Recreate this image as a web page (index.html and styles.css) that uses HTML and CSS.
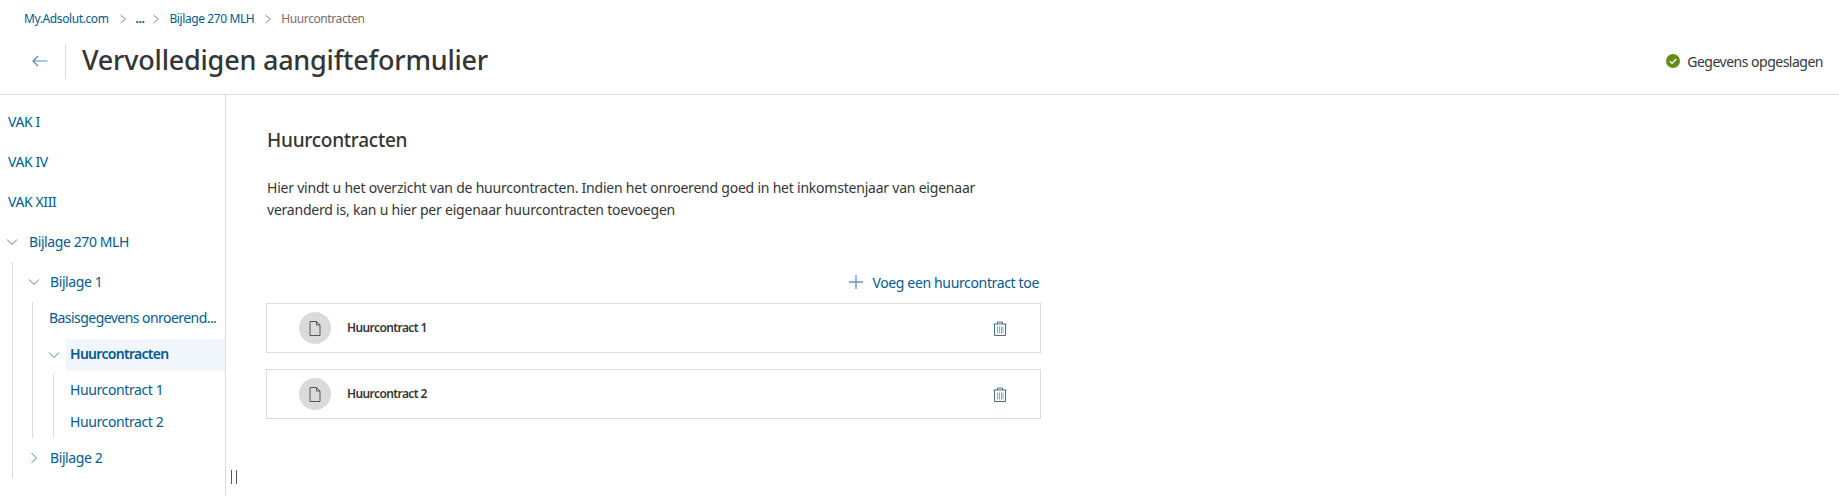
FILE: index.html
```html
<!DOCTYPE html>
<html lang="nl">
<head>
<meta charset="utf-8">
<title>Vervolledigen aangifteformulier</title>
<link rel="stylesheet" href="styles.css">
</head>
<body>
<header class="header">
  <nav class="crumbs">
    <a class="crumb">My.Adsolut.com</a>
    <svg class="sep" viewBox="0 0 8 10"><path d="M1.5 1l5 4-5 4"/></svg>
    <a class="crumb crumb-dots">...</a>
    <svg class="sep sep-tight" viewBox="0 0 8 10"><path d="M1.5 1l5 4-5 4"/></svg>
    <a class="crumb">Bijlage 270 MLH</a>
    <svg class="sep" viewBox="0 0 8 10"><path d="M1.5 1l5 4-5 4"/></svg>
    <span class="crumb-current">Huurcontracten</span>
  </nav>
  <div class="title-row">
    <div class="title-left">
      <svg class="back" viewBox="0 0 16 12"><path d="M15.5 6H1M6 1L1 6l5 5"/></svg>
      <h1 class="title">Vervolledigen aangifteformulier</h1>
    </div>
    <div class="status">
      <svg class="status-icon" viewBox="0 0 14 14"><circle cx="7" cy="7" r="7"/><path d="M3.8 7.2l2.2 2.2 4.2-4.4"/></svg>
      <span>Gegevens opgeslagen</span>
    </div>
  </div>
</header>
<div class="main">
  <aside class="sidebar">
    <ul class="tree tree-root">
      <li class="row top"><a>VAK I</a></li>
      <li class="row top"><a>VAK IV</a></li>
      <li class="row top"><a>VAK XIII</a></li>
      <li>
        <div class="row top has-toggle"><svg class="chev" viewBox="0 0 12 12"><path d="M1 3.5l5 5 5-5"/></svg><a>Bijlage 270 MLH</a></div>
        <ul class="tree level-1">
          <li>
            <div class="row top has-toggle"><svg class="chev" viewBox="0 0 12 12"><path d="M1 3.5l5 5 5-5"/></svg><a>Bijlage 1</a></div>
            <ul class="tree level-2">
              <li class="row leaf"><a class="basis">Basisgegevens onroerend...</a></li>
              <li>
                <div class="row leaf has-toggle active-row"><svg class="chev" viewBox="0 0 12 12"><path d="M1 3.5l5 5 5-5"/></svg><a class="active">Huurcontracten</a></div>
                <ul class="tree level-3">
                  <li class="row sub"><a>Huurcontract 1</a></li>
                  <li class="row sub"><a>Huurcontract 2</a></li>
                </ul>
              </li>
            </ul>
          </li>
          <li>
            <div class="row top has-toggle"><svg class="chev" viewBox="0 0 12 12"><path d="M3.5 1l5 5-5 5"/></svg><a>Bijlage 2</a></div>
          </li>
        </ul>
      </li>
    </ul>
    <div class="handle"></div>
  </aside>
  <main class="content">
    <h2 class="heading">Huurcontracten</h2>
    <p class="intro">Hier vindt u het overzicht van de huurcontracten. Indien het onroerend goed in het inkomstenjaar van eigenaar veranderd is, kan u hier per eigenaar huurcontracten toevoegen</p>
    <div class="add-row">
      <a class="add"><svg class="plus" viewBox="0 0 14 14"><path d="M7 0v14M0 7h14"/></svg>Voeg een huurcontract toe</a>
    </div>
    <div class="card">
      <span class="avatar"><svg class="doc" viewBox="0 0 12 15"><path d="M1 .5h6.5L11 4v10.5H1zM7.5.5V4H11"/></svg></span>
      <span class="card-name">Huurcontract 1</span>
      <svg class="trash" viewBox="0 0 14 15"><path class="t-out" d="M.5 3h13M1.5 3v11.5h11V3M4.5 3V1h5v2"/><path class="t-in" d="M4.5 5.5v7M6.5 5.5v7M8.5 5.5v7M10 5.5v7"/></svg>
    </div>
    <div class="card">
      <span class="avatar"><svg class="doc" viewBox="0 0 12 15"><path d="M1 .5h6.5L11 4v10.5H1zM7.5.5V4H11"/></svg></span>
      <span class="card-name">Huurcontract 2</span>
      <svg class="trash" viewBox="0 0 14 15"><path class="t-out" d="M.5 3h13M1.5 3v11.5h11V3M4.5 3V1h5v2"/><path class="t-in" d="M4.5 5.5v7M6.5 5.5v7M8.5 5.5v7M10 5.5v7"/></svg>
    </div>
  </main>
</div>
</body>
</html>
```
FILE: styles.css
```css
* { box-sizing: border-box; }
html, body { height: 100%; }
body {
  margin: 0;
  background: #fff;
  color: #353535;
  font-family: "Noto Sans", "Open Sans", sans-serif;
  font-size: 14px;
  overflow: hidden;
  display: flex;
  flex-direction: column;
}
ul { list-style: none; margin: 0; padding: 0; }
a { color: #005b92; }

.header {
  height: 95px;
  flex: none;
  border-bottom: 1px solid #dadada;
}
.crumbs {
  display: flex;
  align-items: center;
  height: 36px;
  padding-left: 24px;
  font-size: 12px;
  letter-spacing: -0.4px;
}
.crumb-dots { font-weight: 700; }
.crumb-current { color: #75706f; }
.sep {
  width: 8px;
  height: 10px;
  margin: 1px 9px 0 10px;
  fill: none;
  stroke: #8c8c8c;
  stroke-width: 1;
}
.sep-tight { margin-left: 8px; }
.title-row {
  display: flex;
  align-items: center;
  justify-content: space-between;
  height: 36px;
  margin-top: 7px;
  padding-right: 16px;
}
.title-left { display: flex; align-items: center; height: 100%; }
.back {
  width: 16px;
  height: 12px;
  margin-left: 32px;
  fill: none;
  stroke: #4f8db5;
  stroke-width: 1.2;
}
.title {
  margin: 0 0 0 17px;
  padding-left: 16px;
  height: 35px;
  line-height: 32px;
  border-left: 1px solid #dadada;
  font-size: 27px;
  font-weight: 500;
  letter-spacing: -0.22px;
  color: #353535;
}
.status {
  display: flex;
  align-items: center;
  font-size: 14px;
  letter-spacing: -0.5px;
}
.status-icon { width: 14px; height: 14px; margin-right: 7px; }
.status-icon circle { fill: #648d18; }
.status-icon path { fill: none; stroke: #fff; stroke-width: 1.3; }

.main { flex: 1; display: flex; min-height: 0; }
.sidebar {
  position: relative;
  width: 226px;
  flex: none;
  border-right: 1px solid #dadada;
  padding-top: 7px;
}
.row {
  display: flex;
  align-items: center;
  font-size: 14px;
  letter-spacing: -0.4px;
  white-space: nowrap;
}
.row.top { height: 40px; padding-left: 8px; }
.row.top.has-toggle { padding-left: 6px; }
.row.top a, .row.sub a, .basis { margin-bottom: 2px; }
.row.leaf { height: 32px; margin-bottom: 5px; }
.row.sub { height: 32px; padding-left: 16px; }
.chev {
  width: 12px;
  height: 12px;
  margin-right: 11px;
  flex: none;
  fill: none;
  stroke: #4b7f9f;
  stroke-width: 1;
}
.level-1 { margin-left: 12px; border-left: 1px solid #dadada; }
.level-1 > li > .row.top { padding-left: 15px; }
.level-1 .chev { margin-right: 10px; }
.level-2 { margin-left: 19px; border-left: 1px solid #dadada; }
.level-2 > .row.leaf { padding-left: 16px; }
.basis { letter-spacing: -0.55px; }
.row.active-row { padding-left: 15px; margin-bottom: 3px; }
.level-1 .active-row .chev { margin-right: 6px; }
.active {
  flex: 1;
  align-self: stretch;
  display: flex;
  align-items: center;
  padding-left: 4px;
  padding-bottom: 4px;
  background: #f0f6fb;
  font-weight: 600;
  letter-spacing: -0.7px;
}
.level-3 { margin-left: 20px; border-left: 1px solid #dadada; }
.handle {
  position: absolute;
  right: -12px;
  bottom: 12px;
  width: 6px;
  height: 14px;
  border-left: 1px solid #555;
  border-right: 1px solid #555;
}

.content { flex: 1; padding-left: 40px; min-width: 0; }
.heading {
  margin: 31px 0 0 1px;
  font-size: 19px;
  line-height: 28px;
  font-weight: 500;
  letter-spacing: -0.25px;
  color: #353535;
}
.intro {
  width: 760px;
  margin: 23px 0 0 1px;
  font-size: 14px;
  line-height: 22px;
  letter-spacing: -0.22px;
  color: #353535;
}
.add-row {
  width: 773px;
  display: flex;
  justify-content: flex-end;
  margin-top: 49px;
  height: 24px;
  align-items: center;
}
.add {
  display: flex;
  align-items: center;
  font-size: 14px;
  letter-spacing: -0.35px;
}
.plus {
  width: 14px;
  height: 14px;
  margin-right: 9px;
  fill: none;
  stroke: #5e96ba;
  stroke-width: 1.3;
}
.card {
  width: 775px;
  height: 50px;
  margin-top: 16px;
  border: 1px solid #dadada;
  display: flex;
  align-items: center;
  padding-left: 32px;
}
.add-row + .card { margin-top: 9px; }
.avatar {
  width: 32px;
  height: 32px;
  border-radius: 50%;
  background: #dadada;
  display: flex;
  align-items: center;
  justify-content: center;
  flex: none;
}
.doc { width: 12px; height: 15px; fill: none; stroke: #555; stroke-width: 1; }
.card-name {
  margin-left: 16px;
  margin-bottom: 2px;
  flex: 1;
  font-size: 12px;
  font-weight: 600;
  letter-spacing: -0.6px;
  color: #353535;
}
.trash {
  width: 14px;
  height: 15px;
  margin-right: 33px;
  fill: none;
  stroke-width: 1;
}
.t-out { stroke: #4d6c85; }
.t-in { stroke: #6cb2d8; }
```
